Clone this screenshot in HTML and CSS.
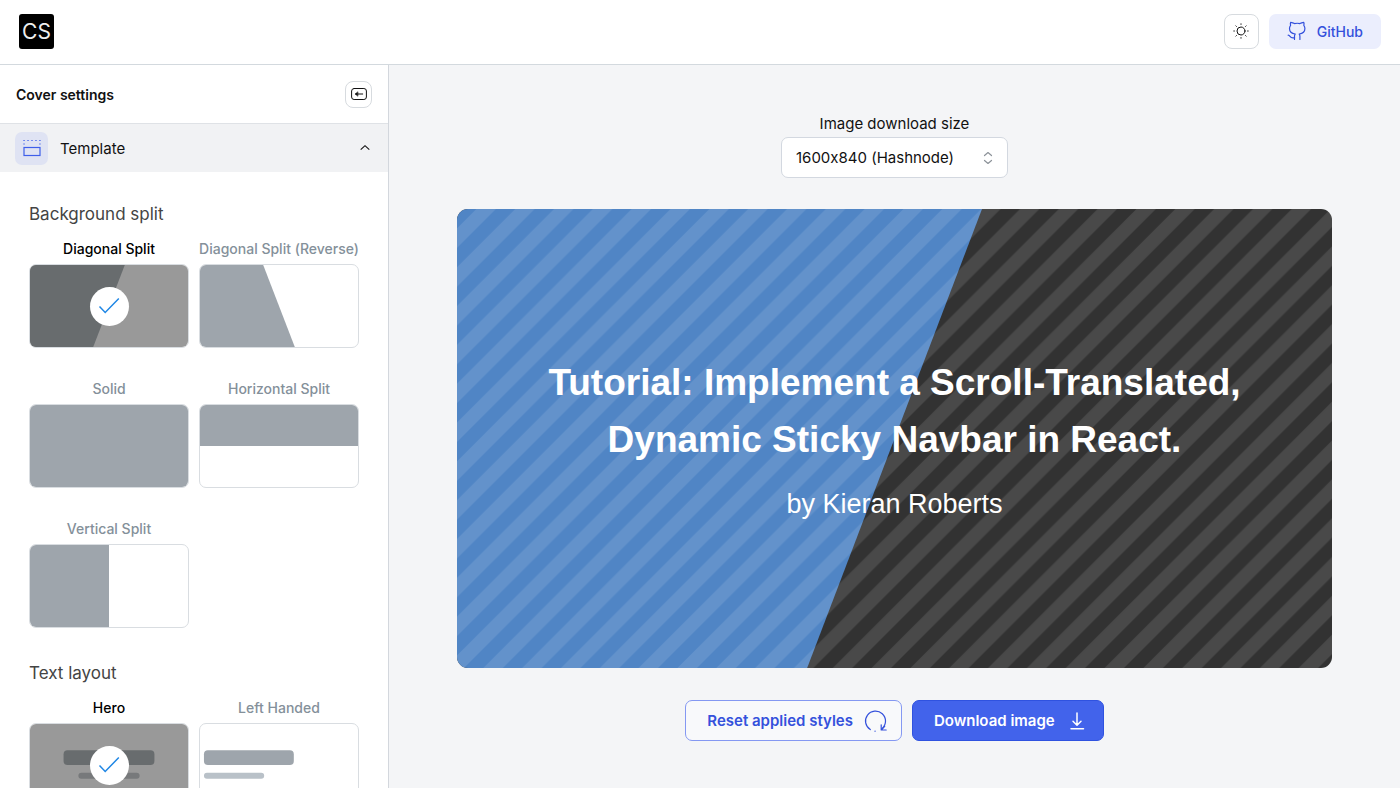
FILE: index.html
```html
<!DOCTYPE html>
<html lang="en">
<head>
<meta charset="utf-8">
<meta name="viewport" content="width=device-width, initial-scale=1">
<title>Cover settings</title>
<link rel="stylesheet" href="styles.css">
</head>
<body>
<header class="topbar">
  <a class="logo" href="#" aria-label="Home">CS</a>
  <div class="topbar-actions">
    <button class="icon-button theme-button" type="button" aria-label="Toggle theme">
      <svg width="16" height="16" viewBox="0 0 16 16" fill="none" stroke="currentColor" stroke-linecap="round">
        <circle cx="8" cy="8" r="4"/>
        <path d="M8 .8v.6M8 14.6v.6M.8 8h.6M14.6 8h.6M2.9 2.9l.5.5M12.6 12.6l.5.5M2.9 13.1l.5-.5M12.6 3.4l.5-.5"/>
      </svg>
    </button>
    <a class="github" href="#">
      <svg width="20" height="20" viewBox="0 0 20 20" fill="none" stroke="currentColor" stroke-width="1.2" stroke-linecap="round" stroke-linejoin="round">
        <path d="M7.500 18.500v-3.200c0-1 .2-1.700.7-2.300C4.800 12.600 2.500 10.900 2.500 7.500c0-1.300.4-2.300 1.100-3.200C3.200 3.200 3.300 2.200 3.700 1.300c1.300.1 2.800.6 3.800 1.300 1.500-.4 3.900-.4 5.400 0 1-.7 2.500-1.200 3.800-1.300.4.9.5 1.900.1 3 .7.900 1.100 1.900 1.100 3.200 0 3.400-2.300 5.100-5.700 5.500.5.600.7 1.300.7 2.300v3.200"/>
        <path d="M7.500 16.700c-3 .7-3.800-.3-4.500-1.300-.5-.7-.9-1.100-1.800-1.200"/>
      </svg>
      GitHub
    </a>
  </div>
</header>
<div class="workspace">
  <aside class="sidebar">
    <div class="sidebar-head">
      <h2 class="sidebar-title">Cover settings</h2>
      <button class="icon-button collapse-button" type="button" aria-label="Collapse settings">
        <svg width="16" height="14" viewBox="0 0 16 14" fill="none" stroke="currentColor" stroke-linecap="round" stroke-linejoin="round">
          <rect x=".6" y="1.500" width="14.800" height="11" rx="2.500"/>
          <path d="M4.500 7h7.200"/><path d="M6.600 5L4.300 7l2.300 2z" fill="currentColor" stroke-width=".6"/>
        </svg>
      </button>
    </div>
    <button class="section-toggle" type="button" aria-expanded="true">
      <span class="section-icon">
        <svg width="20" height="20" viewBox="0 0 20 20" fill="none" stroke="currentColor" stroke-width="1.200">
          <rect x="2" y="9.500" width="16" height="8"/>
          <path d="M1.400 2.500h17.200" stroke-dasharray="1.300 2.675"/>
          <path d="M1.400 6h1.300M17.300 6h1.300"/>
        </svg>
      </span>
      <span class="section-name">Template</span>
      <svg class="chevron" width="12" height="12" viewBox="0 0 12 12" fill="none" stroke="currentColor" stroke-width="1.100"><path d="M1.700 7.700L6 3.700l4.300 4"/></svg>
    </button>
    <div class="section-body">
      <fieldset class="group">
        <legend class="group-title">Background split</legend>
        <div class="options">
          <label class="option">
            <span class="option-name">Diagonal Split</span>
            <span class="thumb">
              <input class="option-input" type="radio" name="split" checked>
              <svg class="thumb-art" viewBox="0 0 160 84" preserveAspectRatio="none"><path d="M0 0h96L64 84H0z"/></svg>
              <span class="tick"><svg width="24" height="24" viewBox="0 0 24 24" fill="none" stroke="currentColor" stroke-width="1.500"><path d="M2.500 12.500l5.700 6L21.800 4.500"/></svg></span>
            </span>
          </label>
          <label class="option">
            <span class="option-name">Diagonal Split (Reverse)</span>
            <span class="thumb">
              <input class="option-input" type="radio" name="split">
              <svg class="thumb-art" viewBox="0 0 160 84" preserveAspectRatio="none"><path d="M0 0h64l32 84H0z"/></svg>
            </span>
          </label>
          <label class="option">
            <span class="option-name">Solid</span>
            <span class="thumb">
              <input class="option-input" type="radio" name="split">
              <svg class="thumb-art" viewBox="0 0 160 84" preserveAspectRatio="none"><path d="M0 0h160v84H0z"/></svg>
            </span>
          </label>
          <label class="option">
            <span class="option-name">Horizontal Split</span>
            <span class="thumb">
              <input class="option-input" type="radio" name="split">
              <svg class="thumb-art" viewBox="0 0 160 84" preserveAspectRatio="none"><path d="M0 0h160v42H0z"/></svg>
            </span>
          </label>
          <label class="option">
            <span class="option-name">Vertical Split</span>
            <span class="thumb">
              <input class="option-input" type="radio" name="split">
              <svg class="thumb-art" viewBox="0 0 160 84" preserveAspectRatio="none"><path d="M0 0h80v84H0z"/></svg>
            </span>
          </label>
        </div>
      </fieldset>
      <fieldset class="group">
        <legend class="group-title">Text layout</legend>
        <div class="options">
          <label class="option">
            <span class="option-name">Hero</span>
            <span class="thumb">
              <input class="option-input" type="radio" name="layout" checked>
              <svg class="thumb-art" viewBox="0 0 160 84" preserveAspectRatio="none"><rect x="34" y="27" width="92" height="15" rx="4"/><rect class="faint" x="49" y="50" width="62" height="6" rx="3"/></svg>
              <span class="tick"><svg width="24" height="24" viewBox="0 0 24 24" fill="none" stroke="currentColor" stroke-width="1.500"><path d="M2.500 12.500l5.700 6L21.800 4.500"/></svg></span>
            </span>
          </label>
          <label class="option">
            <span class="option-name">Left Handed</span>
            <span class="thumb">
              <input class="option-input" type="radio" name="layout">
              <svg class="thumb-art" viewBox="0 0 160 84" preserveAspectRatio="none"><rect x="4" y="27" width="91" height="15" rx="4"/><rect class="faint" x="4" y="50" width="61" height="6" rx="3"/></svg>
            </span>
          </label>
        </div>
      </fieldset>
    </div>
  </aside>
  <main class="stage">
    <div class="size-field">
      <label class="size-label" for="size">Image download size</label>
      <div class="select-wrap">
        <select class="size-select" id="size"><option>1600x840 (Hashnode)</option></select>
        <svg class="select-icon" width="12" height="16" viewBox="0 0 12 16" fill="none" stroke="currentColor" stroke-width="1.200" stroke-linecap="round" stroke-linejoin="round"><path d="M2.500 5.500L6 2.500l3.500 3M2.500 10.500l3.500 3 3.500-3"/></svg>
      </div>
    </div>
    <section class="cover">
      <svg class="cover-art" viewBox="0 0 1600 840" preserveAspectRatio="none" aria-hidden="true">
        <defs>
          <pattern id="stripes" width="71" height="71" patternUnits="userSpaceOnUse">
            <path d="M35.500 0H71L0 71V35.500zM71 35.500V71H35.500z" fill="#fff" fill-opacity=".11"/>
          </pattern>
        </defs>
        <path d="M0 0h1600v840H0z" fill="#323232"/>
        <path d="M0 0h960L640 840H0z" fill="#5085c5"/>
        <path d="M0 0h1600v840H0z" fill="url(#stripes)"/>
      </svg>
      <div class="cover-text">
        <h1 class="cover-title">Tutorial: Implement a Scroll-Translated, Dynamic Sticky Navbar in React.</h1>
        <p class="cover-author">by Kieran Roberts</p>
      </div>
    </section>
    <div class="actions">
      <button class="button button-outline" type="button">Reset applied styles
        <svg width="24" height="24" viewBox="0 0 24 24" fill="none" stroke="currentColor" stroke-width="1.200" stroke-linecap="round" stroke-linejoin="round"><path d="M7.300 20.600A10 10 0 1 1 19.200 19.500"/><path d="M18.200 15.800v5.200h5M18.400 20.800l3.300-3.500"/><path d="M12 22.200h.1"/></svg>
      </button>
      <button class="button button-solid" type="button">Download image
        <svg width="20" height="20" viewBox="0 0 20 20" fill="none" stroke="currentColor" stroke-width="1.500" stroke-linecap="round" stroke-linejoin="round"><path d="M10 2v12M6 10.200l4 4 4-4M4 17.800h12.500"/></svg>
      </button>
    </div>
  </main>
</div>
</body>
</html>
```
FILE: styles.css
```css
* { box-sizing: border-box; }

body {
  margin: 0;
  height: 100vh;
  display: flex;
  flex-direction: column;
  overflow: hidden;
  background: #fff;
  color: #111;
  font-family: Inter, "Liberation Sans", sans-serif;
  font-size: 15px;
  font-feature-settings: "calt" 0;
}

button, select { font: inherit; font-feature-settings: inherit; color: inherit; }
svg { display: block; flex: none; }

.topbar {
  display: flex;
  align-items: center;
  justify-content: space-between;
  flex: none;
  height: 65px;
  padding: 0 19px 2px;
  border-bottom: 1px solid #d3d9de;
}

.logo {
  display: grid;
  place-items: center;
  width: 35px;
  height: 35px;
  border-radius: 3px;
  background: #000;
  color: #eee;
  font-size: 21px;
  text-decoration: none;
}

.topbar-actions { display: flex; gap: 10px; }

.icon-button {
  display: grid;
  place-items: center;
  padding: 0;
  border: 1px solid #d7dbdf;
  border-radius: 8px;
  background: #fff;
}

.theme-button { width: 35px; height: 35px; }
.collapse-button { width: 27px; height: 27px; }

.github {
  display: flex;
  align-items: center;
  gap: 10px;
  height: 35px;
  padding: 0 18px;
  border-radius: 7px;
  background: #ebeefd;
  color: #3451dc;
  font-size: 14px;
  font-weight: 500;
  text-decoration: none;
}

.workspace { display: flex; flex: 1; min-height: 0; }

.sidebar {
  flex: none;
  width: 389px;
  overflow: hidden;
  border-right: 1px solid #d3d7dd;
}

.sidebar-head {
  display: flex;
  align-items: center;
  justify-content: space-between;
  height: 59px;
  padding: 0 16px;
  border-bottom: 1px solid #dfe2e6;
}

.sidebar-title { margin: 0; font-size: 14px; font-weight: 600; }

.section-toggle {
  display: flex;
  align-items: center;
  width: 100%;
  height: 48px;
  padding: 0 17px 0 15px;
  border: 0;
  background: #f1f2f4;
  text-align: left;
}

.section-icon {
  display: grid;
  place-items: center;
  width: 33px;
  height: 33px;
  margin-right: 12px;
  border-radius: 7px;
  background: #dfe3f3;
  color: #3e5fea;
}

.section-name { flex: 1; }

.section-body {
  display: flex;
  flex-direction: column;
  gap: 33px;
  padding: 30px 29px;
}

.group { min-width: 0; margin: 0; padding: 0; border: 0; }
.group-title { margin-bottom: 13px; padding: 0; color: #444; font-size: 17px; line-height: 24px; }

.options {
  display: grid;
  grid-template-columns: 1fr 1fr;
  gap: 31px 10px;
}

.option { display: flex; flex-direction: column; gap: 5px; min-width: 0; }

.option-name {
  color: #84909a;
  font-size: 14px;
  font-weight: 500;
  line-height: 20px;
  text-align: center;
  white-space: nowrap;
}

.option:has(:checked) .option-name { color: #000; }

.thumb {
  position: relative;
  overflow: hidden;
  aspect-ratio: 160 / 84;
  border: 1px solid #d9dde1;
  border-radius: 7px;
}

.thumb-art { width: 100%; height: 100%; fill: #9ea5ac; }
.thumb-art .faint { fill: #b9c1c8; }

.option-input { position: absolute; inset: 0; margin: 0; opacity: 0; }
.option-input:checked + .thumb-art { background: #999; fill: #686c6e; }
.option-input:checked + .thumb-art .faint { fill: #77797b; }

.tick {
  position: absolute;
  inset: 0;
  display: grid;
  place-items: center;
  width: 39px;
  height: 39px;
  margin: auto;
  border-radius: 50%;
  background: #fff;
  color: #2087e5;
}

.stage {
  display: flex;
  flex: 1;
  flex-direction: column;
  align-items: center;
  gap: 31px;
  min-width: 0;
  padding: 47px 32px 32px;
  background: #f4f5f7;
}

.size-field { display: flex; flex-direction: column; align-items: center; gap: 1px; }
.size-label { line-height: 24px; }
.select-wrap { position: relative; }

.size-select {
  appearance: none;
  width: 227px;
  height: 41px;
  padding: 0 14px;
  border: 1px solid #d3d8e0;
  border-radius: 7px;
  background: #fff;
}

.select-icon { position: absolute; top: 13px; right: 14px; color: #8d939a; pointer-events: none; }

.cover {
  position: relative;
  display: grid;
  place-items: center;
  width: 100%;
  max-width: 875px;
  aspect-ratio: 1600 / 840;
  overflow: hidden;
  border-radius: 11px;
  color: #fff;
  font-family: "Liberation Sans", Arial, sans-serif;
  text-align: center;
}

.cover-art { position: absolute; inset: 0; width: 100%; height: 100%; }
.cover-text { position: relative; max-width: 740px; }
.cover-title { margin: 0 0 16px; font-size: 37px; line-height: 57px; }
.cover-author { margin: 0; font-size: 27px; line-height: 40px; }

.actions { display: flex; gap: 10px; padding-top: 1px; }

.button {
  display: flex;
  align-items: center;
  height: 41px;
  border-radius: 7px;
  font-weight: 600;
}

.button-outline {
  gap: 10px;
  padding: 0 14px 0 21px;
  border: 1px solid #8498f2;
  background: #f8f9fb;
  color: #3451dc;
}

.button-solid {
  gap: 12px;
  padding: 0 16px 0 21px;
  border: 1px solid #2f52e0;
  background: #4263eb;
  color: #fff;
}
```
